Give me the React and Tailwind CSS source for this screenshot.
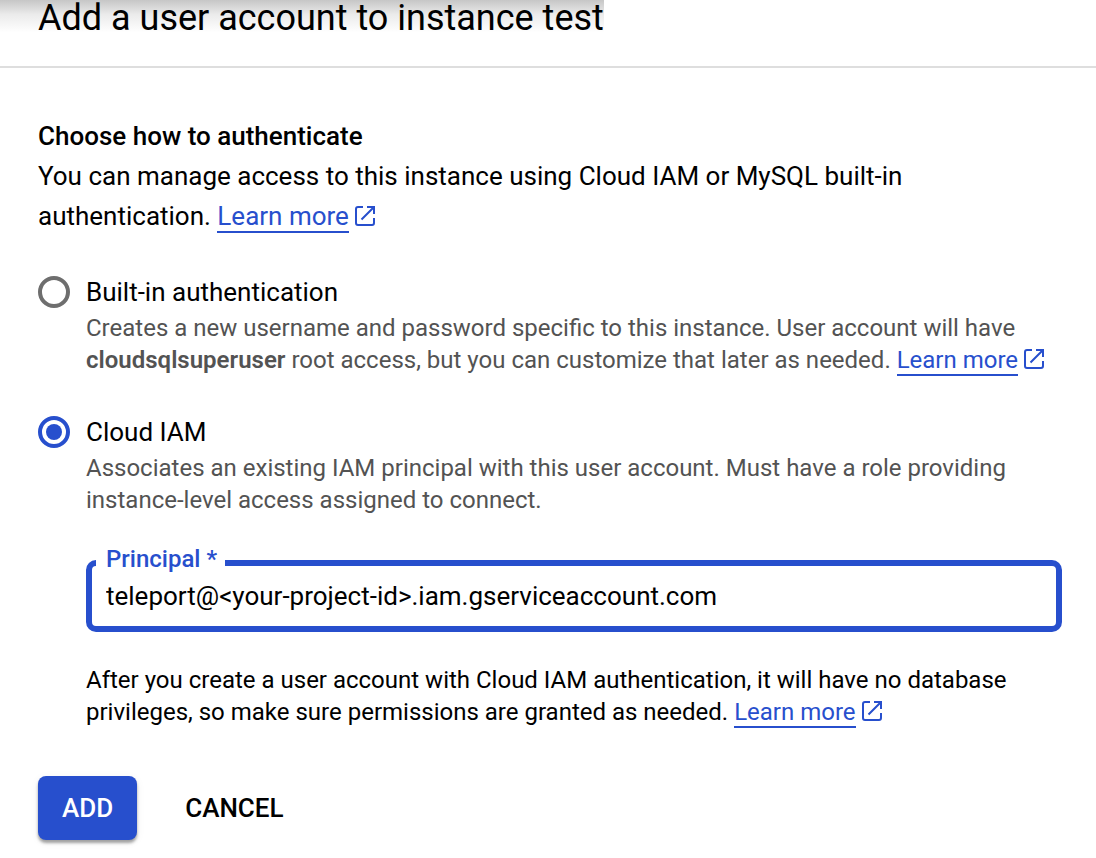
import React from "react";

function LearnMore() {
  return (
    <a href="#learn" className="whitespace-nowrap text-[#274fcd]">
      <span className="border-b-2 border-[#274fcd]">Learn more</span>
      <svg viewBox="0 0 20 20" className="ml-[6px] inline size-5 align-[-1px]" fill="none" stroke="currentColor" strokeWidth="2" aria-hidden="true">
        <path d="M8 1H3a2 2 0 0 0-2 2v14a2 2 0 0 0 2 2h14a2 2 0 0 0 2-2v-5M12 1h7v7M19 1 6.500 13.500" />
      </svg>
    </a>
  );
}

const radioClass =
  "grid size-8 shrink-0 appearance-none place-items-center rounded-full border-4 border-[#6e6e6e] before:size-4 before:rounded-full checked:border-[#274fcd] checked:before:bg-[#274fcd]";

export default function App() {
  return (
    <main className="min-h-screen bg-white font-[Roboto,sans-serif] text-black">
      <header className="border-b-2 border-[#dedede] pb-[30px]">
        <h1 className="w-fit bg-linear-to-b from-[#c6c6c6] via-[#ebebeb] via-40% to-white to-90% pl-[38px] text-[36px] leading-9">
          Add a user account to instance test
        </h1>
      </header>
      <form className="px-[38px] pt-12" onSubmit={(e) => e.preventDefault()}>
        <h2 className="text-[26px] leading-10 font-medium">Choose how to authenticate</h2>
        <p className="max-w-[900px] text-[26px] leading-10">
          You can manage access to this instance using Cloud IAM or MySQL built-in authentication. <LearnMore />
        </p>

        <div className="mt-10 flex gap-4">
          <input id="builtin" type="radio" name="auth" className={radioClass} />
          <div>
            <label htmlFor="builtin" className="block text-[26px] leading-8">Built-in authentication</label>
            <p className="mt-1 text-[24px] leading-8 text-[#535353]">
              Creates a new username and password specific to this instance. User account will have{" "}
              <b className="font-semibold">cloudsqlsuperuser</b> root access, but you can customize that later as needed. <LearnMore />
            </p>
          </div>
        </div>

        <div className="mt-10 flex gap-4">
          <input id="iam" type="radio" name="auth" defaultChecked className={radioClass} />
          <div>
            <label htmlFor="iam" className="block text-[26px] leading-8">Cloud IAM</label>
            <p className="mt-1 text-[24px] leading-8 text-[#535353]">
              Associates an existing IAM principal with this user account. Must have a role providing instance-level access assigned to connect.
            </p>
          </div>
        </div>

        <div className="relative mt-11 -mr-1 ml-12">
          <label htmlFor="principal" className="absolute -top-4 left-[10px] bg-white pr-2 pl-[10px] text-[24px] leading-[30px] font-medium text-[#274fcd]">
            Principal *
          </label>
          <input
            id="principal"
            type="text"
            defaultValue="teleport@<your-project-id>.iam.gserviceaccount.com"
            className="block h-[72px] w-full rounded-[10px] border-6 border-[#274fcd] px-[14px] text-[26px] outline-none"
          />
        </div>

        <p className="mt-8 ml-12 text-[24px] leading-8">
          After you create a user account with Cloud IAM authentication, it will have no database privileges, so make sure permissions are granted as needed. <LearnMore />
        </p>

        <div className="mt-12 flex gap-6 pb-4">
          <button type="submit" className="h-16 rounded-lg bg-[#274fcd] px-6 text-[26px] font-medium text-white shadow-[0_3px_3px_rgba(0,0,0,0.35),0_2px_10px_rgba(0,0,0,0.06)]">ADD</button>
          <button type="button" className="h-16 px-6 text-[26px] font-medium">CANCEL</button>
        </div>
      </form>
    </main>
  );
}
